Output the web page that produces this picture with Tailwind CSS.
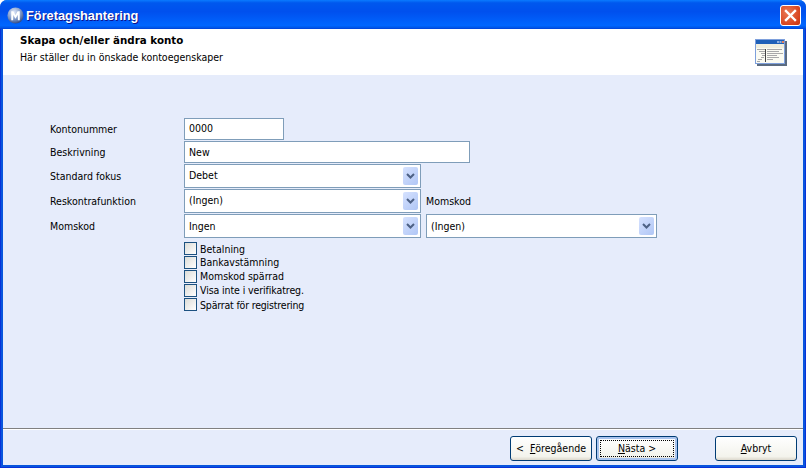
<!DOCTYPE html>
<html>
<head>
<meta charset="utf-8">
<script src="https://cdn.jsdelivr.net/npm/@tailwindcss/browser@4"></script>
</head>
<body class="m-0 bg-white">
<div class="w-[806px] h-[468px] flex flex-col overflow-hidden rounded-t-[7px] font-['DejaVu_Sans_Condensed','DejaVu_Sans',sans-serif] [font-stretch:condensed] text-[10.5px] text-black bg-[#0855dd]">
  <div class="h-[29px] shrink-0 flex items-center pl-[7px] pr-[5px] bg-[linear-gradient(180deg,#0a7bff_0%,#0058ee_10%,#0050ee_40%,#0066ff_88%,#0055e5_96%,#003dd7_100%)]">
    <svg width="17" height="17" viewBox="0 0 16 16" class="mr-[2px] mt-[1px]">
      <defs><radialGradient id="g" cx="0.4" cy="0.3" r="0.8"><stop offset="0" stop-color="#dfe8fa"/><stop offset="0.55" stop-color="#7d97c6"/><stop offset="1" stop-color="#1b3272"/></radialGradient></defs>
      <circle cx="8" cy="8" r="7.6" fill="url(#g)"/>
      <path d="M4 12.500V4h2l2 3.600L10 4h2v8.500h-1.800V7.400L8 11 5.800 7.400v5.100z" fill="#fff"/>
    </svg>
    <span class="font-['Liberation_Sans',sans-serif] [font-stretch:normal] font-bold text-[12.8px] mt-[2px] text-white [text-shadow:1px_1px_0_#0f1089]">Företagshantering</span>
    <div class="ml-auto mt-[2px] w-[21px] h-[21px] rounded-[3px] border border-white bg-[radial-gradient(circle_at_35%_35%,#ea7a55,#d8441f_70%,#c5350f)] flex items-center justify-center">
      <svg width="13" height="13" viewBox="0 0 13 13"><path d="M2 2l9 9M11 2l-9 9" stroke="#fff" stroke-width="2.400" stroke-linecap="square"/></svg>
    </div>
  </div>
  <div class="flex-1 min-h-0 flex flex-col border-x border-b border-[#0831d9]">
  <div class="flex-1 min-h-0 flex flex-col mx-[2px] mb-[2px] bg-[#e6ecfb]">
    <div class="h-[46px] shrink-0 bg-white pl-[17px] pt-[5px] flex">
      <div class="flex-1">
        <div class="font-['DejaVu_Sans',sans-serif] [font-stretch:normal] font-bold text-[10.3px] leading-[13px]">Skapa och/eller ändra konto</div>
        <div class="leading-[13px] mt-[4px]">Här ställer du in önskade kontoegenskaper</div>
      </div>
      <svg width="32" height="27" viewBox="0 0 32 27" class="mt-[5px] mr-[16px]">
        <rect x="2" y="2" width="30" height="25" fill="#5b6b80"/>
        <rect x="0.500" y="0.500" width="29" height="24" fill="#fbfbf2" stroke="#7ea0dc"/>
        <rect x="1" y="1" width="28" height="4" fill="#1f60b8"/>
        <rect x="22" y="2" width="2" height="2" fill="#8fb0e0"/><rect x="24.500" y="2" width="2" height="2" fill="#8fb0e0"/><rect x="27" y="2" width="2" height="2" fill="#e08060"/>
        <rect x="1" y="5" width="28" height="4" fill="#f1efdf"/>
        <path d="M10.500 10v13" stroke="#444" stroke-width="1"/>
        <path d="M2 10.500h8M4 12.500h6M6 14.500h4M7 16.500h3M6 18.500h3M3 20.500h4M2 22.500h3M12 10.500h15M12 12.500h12M12 14.500h16M12 16.500h10M12 18.500h12M12 20.500h6" stroke="#a8a8a8" stroke-width="1"/>
      </svg>
    </div>
    <div class="flex-1 min-h-0 pl-[47px] pt-[43px]">
      <div class="flex flex-col">
        <div class="flex items-center h-[22px] mb-[1px]"><span class="w-[134px] shrink-0 pt-[2px]">Kontonummer</span><div class="w-[100px] h-[22px] border border-[#7f9db9] bg-white pl-[4px] flex items-center">0000</div></div>
        <div class="flex items-center h-[22px] mb-[1px]"><span class="w-[134px] shrink-0 pt-[2px]">Beskrivning</span><div class="w-[286px] h-[22px] border border-[#7f9db9] bg-white pl-[4px] pt-[2px] flex items-center">New</div></div>
        <div class="flex items-center h-[24px] mb-[1px]"><span class="w-[134px] shrink-0 pt-[2px]">Standard fokus</span>
          <div class="w-[237px] h-[24px] border border-[#7f9db9] bg-white pl-[4px] pr-[2px] flex items-center">Debet<div class="ml-auto w-[15px] h-[18px] rounded-[2px] bg-[linear-gradient(135deg,#d6e2ff,#b0c6f5)] flex items-center justify-center"><svg width="9" height="6" viewBox="0 0 9 6"><path d="M1 1l3.500 3.500L8 1" fill="none" stroke="#4d6185" stroke-width="2"/></svg></div></div>
        </div>
        <div class="flex items-center h-[24px] mb-[1px]"><span class="w-[134px] shrink-0 pt-[2px]">Reskontrafunktion</span>
          <div class="w-[237px] h-[24px] border border-[#7f9db9] bg-white pl-[4px] pr-[2px] flex items-center">(Ingen)<div class="ml-auto w-[15px] h-[18px] rounded-[2px] bg-[linear-gradient(135deg,#d6e2ff,#b0c6f5)] flex items-center justify-center"><svg width="9" height="6" viewBox="0 0 9 6"><path d="M1 1l3.500 3.500L8 1" fill="none" stroke="#4d6185" stroke-width="2"/></svg></div></div>
          <span class="ml-[5px] pt-[2px]">Momskod</span>
        </div>
        <div class="flex items-center h-[24px]"><span class="w-[134px] shrink-0 pt-[2px]">Momskod</span>
          <div class="w-[237px] h-[24px] border border-[#7f9db9] bg-white pl-[4px] pr-[2px] flex items-center"><span class="pt-[2px]">Ingen</span><div class="ml-auto w-[15px] h-[18px] rounded-[2px] bg-[linear-gradient(135deg,#d6e2ff,#b0c6f5)] flex items-center justify-center"><svg width="9" height="6" viewBox="0 0 9 6"><path d="M1 1l3.500 3.500L8 1" fill="none" stroke="#4d6185" stroke-width="2"/></svg></div></div>
          <div class="ml-[5px] w-[231px] h-[24px] border border-[#7f9db9] bg-white pl-[4px] pr-[2px] flex items-center"><span class="pt-[2px]">(Ingen)</span><div class="ml-auto w-[15px] h-[18px] rounded-[2px] bg-[linear-gradient(135deg,#d6e2ff,#b0c6f5)] flex items-center justify-center"><svg width="9" height="6" viewBox="0 0 9 6"><path d="M1 1l3.500 3.500L8 1" fill="none" stroke="#4d6185" stroke-width="2"/></svg></div></div>
        </div>
        <div class="ml-[134px] mt-[4px] flex flex-col gap-[1px]">
          <div class="flex items-center h-[13px]"><span class="w-[13px] h-[13px] border border-[#1c5180] bg-[linear-gradient(135deg,#dcdcd7,#ffffff)] mr-[3px]"></span><span class="pt-[2px]">Betalning</span></div>
          <div class="flex items-center h-[13px]"><span class="w-[13px] h-[13px] border border-[#1c5180] bg-[linear-gradient(135deg,#dcdcd7,#ffffff)] mr-[3px]"></span><span class="pt-[1px]">Bankavstämning</span></div>
          <div class="flex items-center h-[13px]"><span class="w-[13px] h-[13px] border border-[#1c5180] bg-[linear-gradient(135deg,#dcdcd7,#ffffff)] mr-[3px]"></span><span class="pt-[1px]">Momskod spärrad</span></div>
          <div class="flex items-center h-[13px]"><span class="w-[13px] h-[13px] border border-[#1c5180] bg-[linear-gradient(135deg,#dcdcd7,#ffffff)] mr-[3px]"></span><span class="pt-[1px] tracking-[-0.1px]">Visa inte i verifikatreg.</span></div>
          <div class="flex items-center h-[13px]"><span class="w-[13px] h-[13px] border border-[#1c5180] bg-[linear-gradient(135deg,#dcdcd7,#ffffff)] mr-[3px]"></span><span class="pt-[2px] tracking-[-0.18px]">Spärrat för registrering</span></div>
        </div>
      </div>
    </div>
    <div class="h-[37px] shrink-0 border-t border-t-[#808080] shadow-[inset_0_1px_0_#fff] flex items-start pt-[7px] pl-[507px]">
      <div class="w-[82px] h-[25px] rounded-[3px] border border-[#003c74] bg-[linear-gradient(180deg,#ffffff,#f3f3ec_85%,#dcd8cc)] flex items-center justify-center">&lt;&nbsp;&nbsp;<u>F</u>öregående</div>
      <div class="ml-[4px] w-[82px] h-[25px] rounded-[3px] border border-[#003c74] bg-[linear-gradient(180deg,#ffffff,#f3f3ec_85%,#dcd8cc)] shadow-[inset_0_0_0_2px_#a9c4ee] flex items-center justify-center p-[3px]"><span class="w-full h-full border border-dotted border-black flex items-center justify-center"><span><u>N</u>ästa &gt;</span></span></div>
      <div class="ml-[37px] w-[82px] h-[25px] rounded-[3px] border border-[#003c74] bg-[linear-gradient(180deg,#ffffff,#f3f3ec_85%,#dcd8cc)] flex items-center justify-center"><span><u>A</u>vbryt</span></div>
    </div>
  </div>
  </div>
</div>
</body>
</html>
